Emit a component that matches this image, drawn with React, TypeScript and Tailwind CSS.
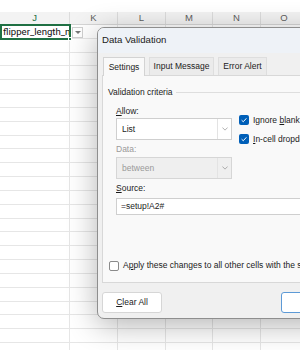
import type { ReactNode } from 'react'

const columns = [
  { label: 'J', width: 'w-[70px]', active: true },
  { label: 'K', width: 'w-[48px]' },
  { label: 'L', width: 'w-[48px]' },
  { label: 'M', width: 'w-[47px]' },
  { label: 'N', width: 'w-[48px]' },
  { label: 'O', width: 'w-[47px]' },
  { label: 'P', width: 'w-[48px]' },
]

const rows = Array.from({ length: 24 }, (_, i) => i)

function Chevron({ className }: { className?: string }) {
  return (
    <svg viewBox="0 0 8 5" className={className} fill="none">
      <path d="M0.5 0.5 L4 4 L7.5 0.5" stroke="currentColor" strokeWidth="0.9" />
    </svg>
  )
}

function Checked() {
  return (
    <span className="w-[10px] h-[10px] rounded-[2px] bg-[#005fb8] flex items-center justify-center shrink-0">
      <svg viewBox="0 0 10 10" className="w-[8px] h-[8px]" fill="none">
        <path d="M2 5.2 L4.1 7.2 L8 2.9" stroke="white" strokeWidth="1.2" />
      </svg>
    </span>
  )
}

function Select({ value, disabled }: { value: string; disabled?: boolean }) {
  return (
    <div
      className={
        disabled
          ? 'w-[116px] h-[22px] flex border border-[#d6d6d6] bg-[#efefef] text-[#9a9a9a]'
          : 'w-[116px] h-[22px] flex border border-[#cfcfcf] bg-white'
      }
    >
      <span className="flex-1 flex items-center pl-[5px]">{value}</span>
      <span className="w-[14px] flex items-center justify-center border-l border-[#e3e3e3] text-[#8a8a8a]">
        <Chevron className="w-[6px] h-[4px]" />
      </span>
    </div>
  )
}

function Key({ children }: { children: ReactNode }) {
  return <span className="underline underline-offset-[1px]">{children}</span>
}

function Sheet() {
  return (
    <div className="absolute inset-0 bg-white">
      <div className="h-[12px] bg-white" />
      {/* column headers */}
      <div className="flex h-[13px] bg-[#f3f3f3] border-b border-[#d6d6d6] font-['Liberation_Sans',Arial,sans-serif] text-[9.5px]">
        {columns.map(c => (
          <div
            key={c.label}
            className={
              c.active
                ? `${c.width} shrink-0 border-r border-[#dcdcdc] flex items-center justify-center text-[#1e7145]`
                : `${c.width} shrink-0 border-r border-[#dcdcdc] flex items-center justify-center text-[#5f5f5f]`
            }
          >
            {c.label}
          </div>
        ))}
      </div>
      {/* cells */}
      {rows.map(r => (
        <div key={r} className="flex h-[13.83px]">
          {columns.map(c => (
            <div
              key={c.label}
              className={`${c.width} shrink-0 border-r border-b border-[#e6e6e6] overflow-hidden whitespace-nowrap`}
            >
              {r === 0 && c.active && (
                <span className="block pl-[3px] pt-[1px] font-['Roboto',sans-serif] text-[9.6px] leading-[12px] text-[#111]">
                  flipper_length_mm
                </span>
              )}
            </div>
          ))}
        </div>
      ))}
      {/* selection + filter dropdown */}
      <div className="absolute left-0 top-[24px] w-[71px] h-[16px] border-2 border-[#1f7043]" />
      <div className="absolute left-[68px] top-[37px] w-[4px] h-[4px] bg-[#1f7043] border border-white" />
      <div className="absolute left-[72px] top-[27px] w-[11px] h-[11px] border border-[#d0d0d0] bg-white flex items-center justify-center">
        <span className="w-0 h-0 border-l-[3px] border-r-[3px] border-t-[3px] border-l-transparent border-r-transparent border-t-[#777]" />
      </div>
    </div>
  )
}

function Dialog() {
  return (
    <div className="absolute left-[97px] top-[27px] w-[316px] h-[292px] rounded-[7px] border border-[#8e8e8e] bg-[#f0f0f0] shadow-[0_6px_30px_rgba(0,0,0,0.3)] overflow-hidden font-['Liberation_Sans',Arial,sans-serif] text-[8.5px] text-[#1b1b1b]">
      {/* title bar */}
      <div className="h-[25px] bg-[#eef2f7] flex items-center pl-[4px] text-[9.6px] text-[#1a1a1a]">
        Data Validation
      </div>

      {/* tabs */}
      <div className="flex gap-[4px] pl-[5px] pt-[4px]">
        <div className="relative z-10 w-[42px] h-[19px] -mb-px flex items-center justify-center bg-[#f9f9f9] border border-b-0 border-[#d3d3d3]">
          Settings
        </div>
        <div className="w-[65px] h-[18px] flex items-center justify-center bg-[#ebebeb] border border-b-0 border-[#dedede]">
          Input Message
        </div>
        <div className="w-[49px] h-[18px] flex items-center justify-center bg-[#ebebeb] border border-b-0 border-[#dedede]">
          Error Alert
        </div>
      </div>

      {/* tab panel */}
      <div className="ml-[4px] w-[302px] h-[208px] border border-[#d8d8d8] bg-[#f9f9f9] flex flex-col">
        <div className="mt-[10px] h-[12px] flex items-center pl-[5px]">
          <span>Validation criteria</span>
          <span className="flex-1 h-px bg-[#dedede] ml-[3px]" />
        </div>

        <div className="flex pl-[13px] gap-[7px]">
          <div className="flex flex-col">
            <span className="mt-[7px] h-[12px] leading-[12px]">
              <Key>A</Key>llow:
            </span>
            <div className="mt-px">
              <Select value="List" />
            </div>
            <span className="mt-[3px] h-[12px] leading-[12px] text-[#9a9a9a]">Data:</span>
            <div className="mt-[2px]">
              <Select value="between" disabled />
            </div>
          </div>
          <div className="flex flex-col gap-[9px] mt-[17px] whitespace-nowrap">
            <div className="flex items-center gap-[4px] h-[10px]">
              <Checked />
              <span>
                Ignore <Key>b</Key>lank
              </span>
            </div>
            <div className="flex items-center gap-[4px] h-[10px]">
              <Checked />
              <span>
                <Key>I</Key>n-cell dropdown
              </span>
            </div>
          </div>
        </div>

        <span className="pl-[13px] mt-[3px] h-[12px] leading-[12px]">
          <Key>S</Key>ource:
        </span>
        <div className="ml-[13px] mr-[6px] mt-[4px] h-[17px] border border-[#cfcfcf] bg-white flex items-center pl-[4px]">
          =setup!A2#
        </div>

        <div className="mt-auto mb-[10px] pl-[6px] flex items-center gap-[4px] whitespace-nowrap">
          <span className="w-[10px] h-[10px] rounded-[2px] border border-[#8a8a8a] bg-white shrink-0" />
          <span>
            A<Key>p</Key>ply these changes to all other cells with the same settings
          </span>
        </div>
      </div>

      {/* buttons */}
      <div className="mt-[9px] flex justify-between pl-[4px] pr-[6px]">
        <button className="w-[60px] h-[21px] bg-white border border-[#d6d6d6] rounded-[3px] text-[8.5px]">
          <Key>C</Key>lear All
        </button>
        <div className="flex gap-[5px]">
          <button className="w-[60px] h-[21px] bg-white border border-[#5d9ad6] rounded-[3px] text-[8.5px]">
            OK
          </button>
          <button className="w-[60px] h-[21px] bg-white border border-[#d6d6d6] rounded-[3px] text-[8.5px]">
            Cancel
          </button>
        </div>
      </div>
    </div>
  )
}

export default function App() {
  return (
    <div className="relative w-[300px] h-[350px] overflow-hidden bg-white">
      <Sheet />
      <Dialog />
    </div>
  )
}
